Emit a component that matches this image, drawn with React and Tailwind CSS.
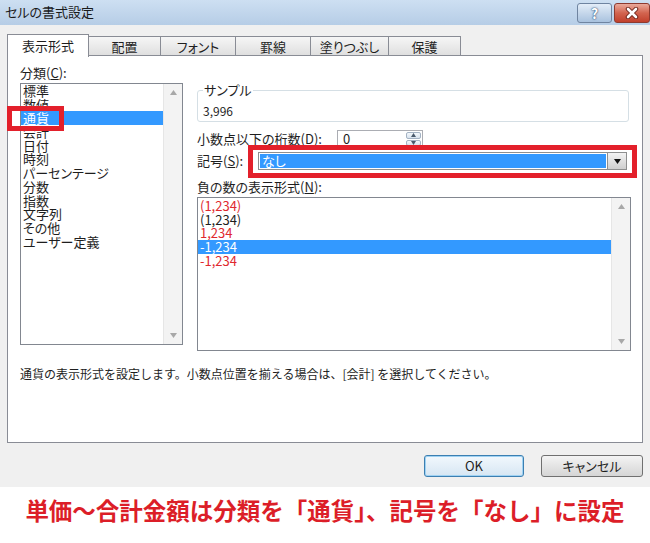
import React from 'react'

const ui = "font-['Noto_Sans_CJK_JP',sans-serif]"
const palt = "[font-feature-settings:'palt']"

function Arrow({ dir = 'down', color = '#9a9a9a', w = 7 }) {
  const h = Math.ceil(w / 2) + 1
  return (
    <svg width={w} height={h} viewBox={`0 0 ${w} ${h}`}>
      {dir === 'down'
        ? <polygon points={`0,0 ${w},0 ${w / 2},${h}`} fill={color} />
        : <polygon points={`0,${h} ${w},${h} ${w / 2},0`} fill={color} />}
    </svg>
  )
}

function ScrollBar() {
  return (
    <div className="w-[19px] h-full bg-[#f3f3f3] border-l border-[#e6e6e6] flex flex-col justify-between items-center py-[6px]">
      <Arrow dir="up" color="#a8a8a8" />
      <Arrow dir="down" color="#a8a8a8" />
    </div>
  )
}

function Tab({ label, width, active }) {
  if (active) {
    return (
      <div className={`${width} h-[23px] bg-white border border-b-0 border-[#898c95] relative z-10 -mb-px flex items-center justify-center text-[13px] text-[#1e1e1e] ${palt}`}>
        {label}
      </div>
    )
  }
  return (
    <div className={`${width} h-[20px] -ml-px bg-linear-to-b from-[#f6f6f6] to-[#dedede] border border-b-0 border-[#898c95] flex items-center justify-center text-[13px] text-[#1e1e1e] ${palt}`}>
      {label}
    </div>
  )
}

export default function App() {
  const categories = ['標準', '数値', '通貨', '会計', '日付', '時刻', 'パーセンテージ', '分数', '指数', '文字列', 'その他', 'ユーザー定義']
  const negatives = [
    { text: '(1,234)', red: true },
    { text: '(1,234)', red: false },
    { text: '1,234', red: true },
    { text: '-1,234', red: false, selected: true },
    { text: '-1,234', red: true },
  ]

  return (
    <div className={`w-[650px] h-[543px] bg-white relative overflow-hidden ${ui}`}>
      <div className="h-[487px] bg-[#f0f0f0] flex flex-col">
        {/* title bar */}
        <div className="h-[25px] flex justify-between bg-linear-to-b from-[#cddff2] to-[#b6cde6]">
          <div className={`pl-[5px] pt-[3px] text-[13px] leading-[18px] text-[#1a1a1a] ${palt}`}>セルの書式設定</div>
          <div className="flex gap-[2px] pt-[3px]">
            <div className="w-[35px] h-[20px] rounded-[3px] border border-[#6f84a0] bg-linear-to-b from-[#e3edf8] to-[#a9c2de] flex items-center justify-center">
              <span className="text-[14px] font-bold leading-none text-white [text-shadow:0_0_2px_#27476e,0_0_1px_#27476e]">?</span>
            </div>
            <div className="w-[36px] h-[20px] rounded-[3px] border border-[#8d3a2f] bg-linear-to-b from-[#e9a99b] via-[#d2644f] to-[#c13f2b] flex items-center justify-center">
              <svg width="14" height="12" viewBox="0 0 14 12">
                <path d="M3 2 L11 10 M11 2 L3 10" stroke="#6b2318" strokeWidth="4.5" strokeLinecap="round" />
                <path d="M3 2 L11 10 M11 2 L3 10" stroke="#ffffff" strokeWidth="2.6" strokeLinecap="round" />
              </svg>
            </div>
          </div>
        </div>

        {/* tabs */}
        <div className="mt-[8px] px-[7px] flex items-end h-[23px]">
          <Tab label="表示形式" width="w-[82px]" active />
          <Tab label="配置" width="w-[73px]" />
          <Tab label="フォント" width="w-[76px]" />
          <Tab label="罫線" width="w-[76px]" />
          <Tab label="塗りつぶし" width="w-[79px]" />
          <Tab label="保護" width="w-[73px]" />
        </div>

        {/* panel */}
        <div className="mx-[7px] h-[388px] -mt-px bg-white border border-[#898c95] flex flex-col text-[#1e1e1e]">
          <div className={`flex pt-[10px] pl-[12px] pr-[11px] gap-[14px] ${palt}`}>
            {/* left: categories */}
            <div className="w-[163px] flex flex-col">
              <div className="h-[14px] text-[13px] leading-[14px]">分類(<span className="underline">C</span>):</div>
              <div className="mt-[3px] h-[262px] border border-[#828790] flex">
                <div className="flex-1 flex flex-col">
                  {categories.map((c) => (
                    <div
                      key={c}
                      className={`text-[13px] leading-[13.7px] h-[13.7px] px-[2px] whitespace-nowrap ${c === '通貨' ? 'bg-[#3399ff] text-white' : ''}`}
                    >
                      {c}
                    </div>
                  ))}
                </div>
                <ScrollBar />
              </div>
            </div>

            {/* right */}
            <div className="flex-1 flex flex-col">
              <div className="mt-[24px] mr-[2px] h-[32px] border border-[#d5dfe5] rounded-[3px] relative">
                <div className="absolute -top-[9px] left-[5px] bg-white px-[1px] text-[13px] leading-[16px]">サンプル</div>
                <div className="pl-[5px] pt-[13px] text-[12px] leading-[14px]">3,996</div>
              </div>

              <div className="mt-[8px] h-[18px] flex items-center">
                <div className="w-[140px] text-[13px] leading-[14px]">
                  小数点以下の桁数(<span className="underline">D</span>):
                </div>
                <div className="w-[86px] h-[18px] border border-[#abadb3] flex">
                  <div className="flex-1 pl-[5px] text-[13px] leading-[16px]">0</div>
                  <div className="w-[17px] flex flex-col gap-px p-px">
                    <div className="flex-1 rounded-[2px] border border-[#a4b3c4] bg-linear-to-b from-[#f4f8fc] to-[#d8e3ee] flex items-center justify-center">
                      <Arrow dir="up" color="#4a5a6c" w={5} />
                    </div>
                    <div className="flex-1 rounded-[2px] border border-[#a4b3c4] bg-linear-to-b from-[#f4f8fc] to-[#d8e3ee] flex items-center justify-center">
                      <Arrow dir="down" color="#4a5a6c" w={5} />
                    </div>
                  </div>
                </div>
              </div>

              <div className="mt-[4px] h-[18px] flex items-center">
                <div className="w-[61px] text-[13px] leading-[14px]">
                  記号(<span className="underline">S</span>):
                </div>
                <div className="flex-1 mr-[4px] h-[18px] border border-[#8e8f8f] bg-white flex">
                  <div className="flex-1 m-px bg-[#3399ff] text-white text-[13px] leading-[14px] pl-[2px]">なし</div>
                  <div className="w-[19px] border-l border-[#8e8f8f] bg-linear-to-b from-[#f3f3f3] to-[#cfcfcf] flex items-center justify-center">
                    <Arrow dir="down" color="#111111" w={7} />
                  </div>
                </div>
              </div>

              <div className="mt-[10px] h-[14px] text-[13px] leading-[14px]">
                負の数の表示形式(<span className="underline">N</span>):
              </div>
              <div className="mt-[3px] h-[154px] border border-[#828790] flex">
                <div className="flex-1 flex flex-col pt-px">
                  {negatives.map((n, i) => (
                    <div
                      key={i}
                      className={`text-[13px] leading-[13.7px] h-[13.7px] px-[2px] ${n.selected ? 'bg-[#3399ff] text-white' : n.red ? 'text-[#e0282e]' : 'text-[#1e1e1e]'}`}
                    >
                      {n.text}
                    </div>
                  ))}
                </div>
                <ScrollBar />
              </div>
            </div>
          </div>

          <div className="mt-[16px] px-[12px] text-[12px] leading-[14px]">
            通貨の表示形式を設定します。小数点位置を揃える場合は、[会計] を選択してください。
          </div>
        </div>

        {/* buttons */}
        <div className="mt-[12px] pr-[7px] flex justify-end gap-[17px]">
          <button className="w-[100px] h-[22px] rounded-[3px] border border-[#3c7fb1] bg-linear-to-b from-[#f2f8fd] to-[#d6e6f3] text-[13px] leading-[18px] text-[#1e1e1e] shadow-[inset_0_0_0_1px_#9fd2f3]">
            OK
          </button>
          <button className={`w-[102px] h-[22px] rounded-[3px] border border-[#707070] bg-linear-to-b from-[#f4f4f4] to-[#d5d5d5] text-[13px] leading-[18px] text-[#1e1e1e] ${palt}`}>
            キャンセル
          </button>
        </div>
      </div>

      <div className="mt-[8px] text-center text-[23.5px] leading-[30px] font-bold text-[#dc1e28]">
        単価〜合計金額は分類を「通貨」、記号を「なし」に設定
      </div>

      {/* red annotation frames */}
      <div className="absolute left-[7px] top-[106px] w-[57px] h-[25px] border-[5px] border-[#e3202b]" />
      <div className="absolute left-[248px] top-[145px] w-[389px] h-[33px] border-[5px] border-[#e3202b]" />
    </div>
  )
}
